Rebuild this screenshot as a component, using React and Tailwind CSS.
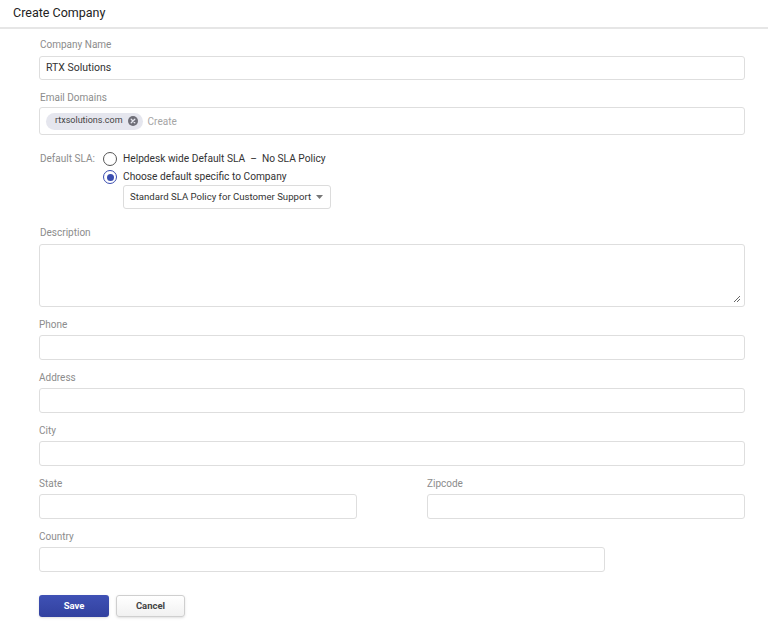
import React from 'react';

const font = { fontFamily: 'Roboto, "Liberation Sans", sans-serif' };

function Label({ children, className = '' }) {
  return <div className={`text-[10px] leading-[12px] text-[#8c8c8c] ${className}`}>{children}</div>;
}

function Field({ label, className = '', inputClass = 'w-full' }) {
  return (
    <div className={`mt-[12px] ${className}`}>
      <Label>{label}</Label>
      <div className={`mt-[4px] h-[25px] rounded-[3px] border border-[#dedede] bg-white ${inputClass}`} />
    </div>
  );
}

function Radio({ checked, children }) {
  return (
    <div className="flex h-[18px] items-center gap-[6px]">
      {checked ? (
        <span className="flex h-[14px] w-[14px] items-center justify-center rounded-full border-[1.5px] border-[#3a4db0]">
          <span className="h-[7px] w-[7px] rounded-full bg-[#3a4db0]" />
        </span>
      ) : (
        <span className="h-[14px] w-[14px] rounded-full border-[1.5px] border-[#555]" />
      )}
      <span className="whitespace-nowrap text-[10.2px] text-[#333]">{children}</span>
    </div>
  );
}

export default function App() {
  return (
    <div className="min-h-[623px] w-[768px] bg-white" style={font}>
      <div className="flex h-[27px] items-center px-[13px] text-[12.5px] text-[#222]">Create Company</div>
      <div className="h-[2px] bg-[#e6e6e6]" />

      <div className="w-[706px] ml-[39px] pt-[10px]">
        <Label className="pl-[1px]">Company Name</Label>
        <div className="mt-[5px] flex h-[24px] items-center rounded-[3px] border border-[#dedede] px-[6px] text-[10.5px] text-[#333]">
          RTX Solutions
        </div>

        <Label className="mt-[12px] pl-[1px]">Email Domains</Label>
        <div className="mt-[3px] flex h-[28px] items-center gap-[5px] rounded-[3px] border border-[#dedede] px-[6px]">
          <span className="flex h-[17px] items-center gap-[5px] rounded-full bg-[#e5e6ee] pl-[9px] pr-[5px] text-[9px] text-[#444]">
            rtxsolutions.com
            <svg width="10" height="10" viewBox="0 0 10 10">
              <circle cx="5" cy="5" r="5" fill="#6f6f78" />
              <path d="M3.2 3.2 L6.8 6.8 M6.8 3.2 L3.2 6.8" stroke="#e5e6ee" strokeWidth="1.3" strokeLinecap="round" />
            </svg>
          </span>
          <span className="text-[10px] text-[#a5a5a5]">Create</span>
        </div>

        <div className="mt-[15px] flex">
          <div className="w-[64px] pl-[1px] pt-[3px] text-[10px] leading-[12px] text-[#8c8c8c]">Default SLA:</div>
          <div>
            <Radio>
              Helpdesk wide Default SLA&nbsp;&nbsp;–&nbsp;&nbsp;No SLA Policy
            </Radio>
            <Radio checked>Choose default specific to Company</Radio>
            <div className="ml-[20px] mt-[-1px] flex h-[24px] w-[208px] items-center justify-between whitespace-nowrap rounded-[3px] border border-[#dcdcdc] pl-[6px] pr-[7px] text-[9.6px] text-[#333]">
              Standard SLA Policy for Customer Support
              <svg width="7" height="4" viewBox="0 0 7 4">
                <path d="M0 0 L7 0 L3.5 4 Z" fill="#777" />
              </svg>
            </div>
          </div>
        </div>

        <Label className="mt-[18px] pl-[1px]">Description</Label>
        <div className="relative mt-[5px] h-[63px] rounded-[3px] border border-[#dedede]">
          <svg className="absolute bottom-[3px] right-[3px]" width="8" height="8" viewBox="0 0 8 8">
            <path d="M7 1 L1 7 M7 4 L4 7" stroke="#666" strokeWidth="1" />
          </svg>
        </div>

        <Field label="Phone" />
        <Field label="Address" />
        <Field label="City" />

        <div className="flex gap-[70px]">
          <Field label="State" className="flex-1" />
          <Field label="Zipcode" className="flex-1" />
        </div>

        <Field label="Country" inputClass="w-[566px]" />

        <div className="mt-[23px] flex gap-[7px]">
          <button className="h-[22px] w-[70px] rounded-[3px] bg-gradient-to-b from-[#3f51b5] to-[#32419f] text-[9.5px] font-bold text-white shadow-sm">
            Save
          </button>
          <button className="h-[22px] w-[69px] rounded-[3px] border border-[#cfcfcf] bg-gradient-to-b from-white to-[#f1f1f1] text-[9.5px] font-bold text-[#444] shadow-sm">
            Cancel
          </button>
        </div>
      </div>
    </div>
  );
}
